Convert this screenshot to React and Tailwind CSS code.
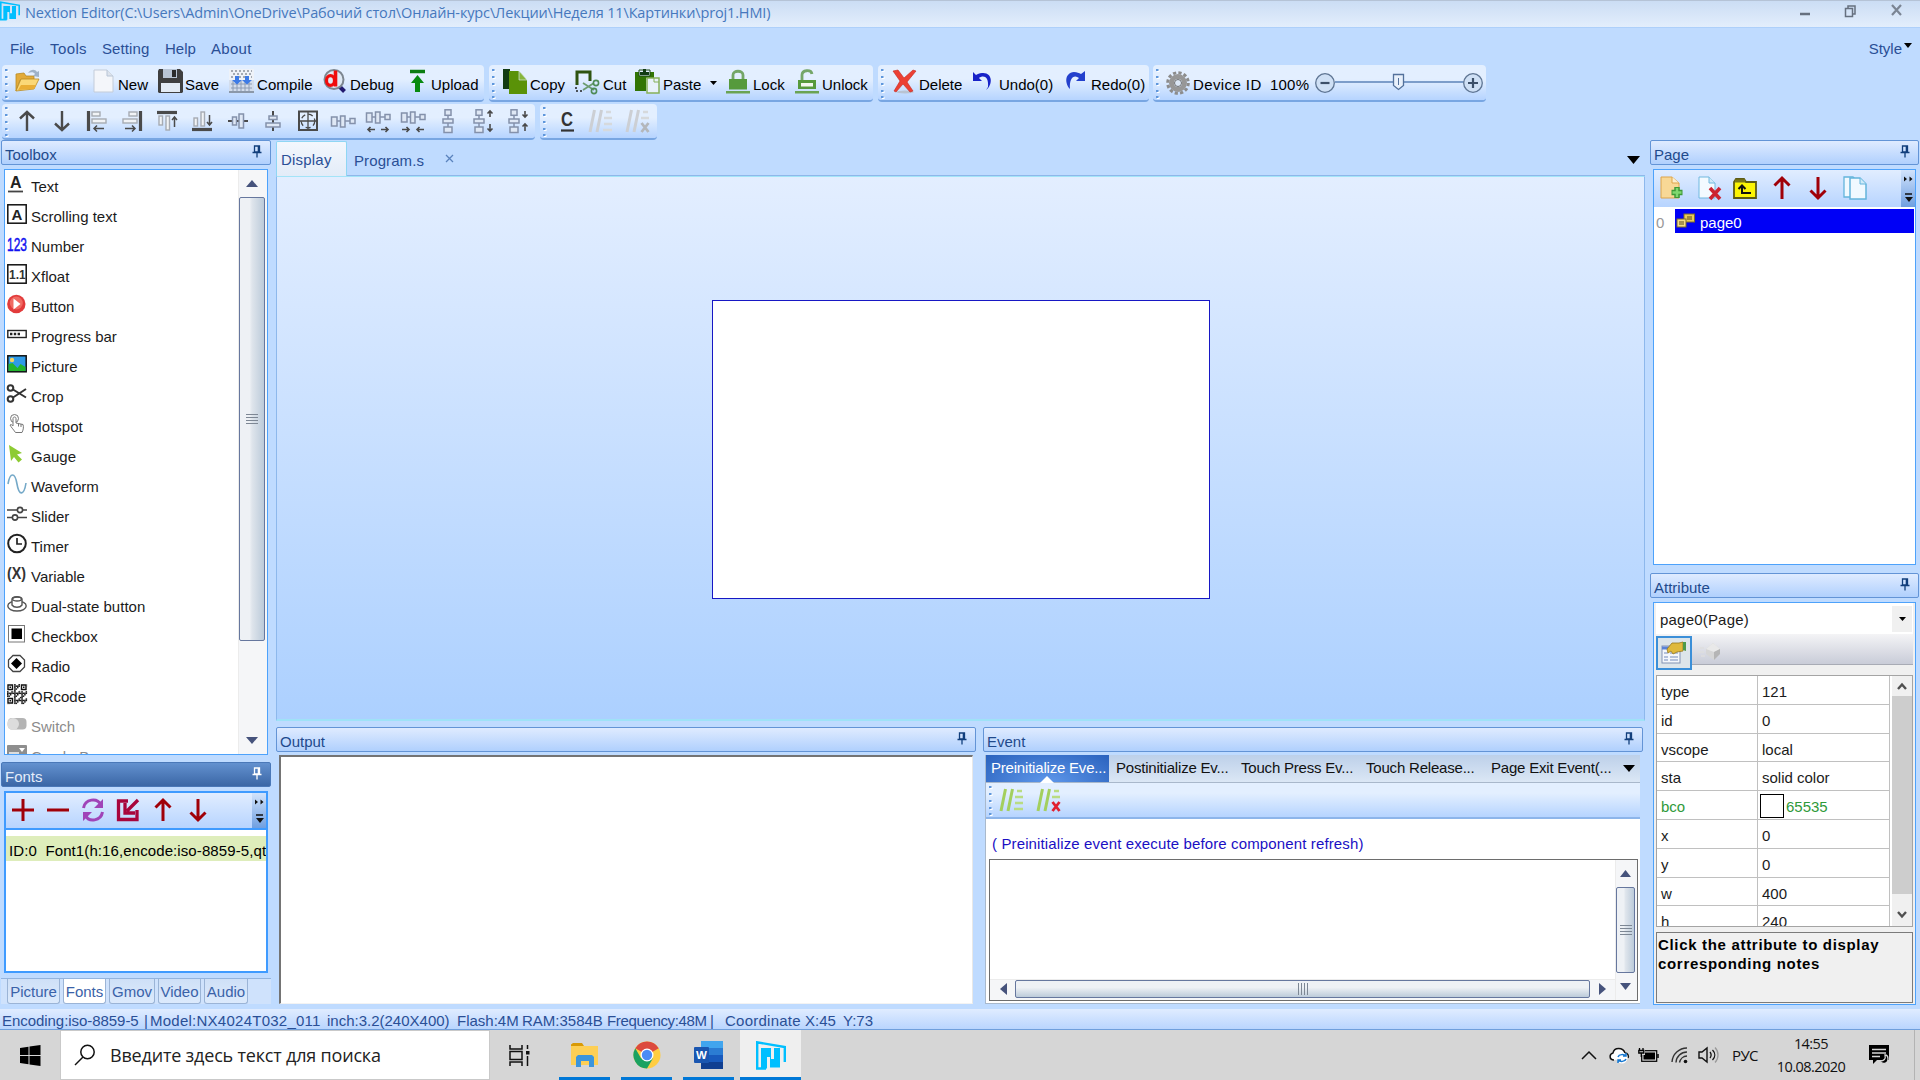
import React from 'react';

/* ---------- shared bits ---------- */

function Svg({ w, h, className = '', children }) {
  return (
    <svg width={w} height={h} viewBox={`0 0 ${w} ${h}`} fill="none" className={`shrink-0 overflow-visible ${className}`}>
      {children}
    </svg>
  );
}

const Pin = ({ color = '#123f7c' }) => (
  <Svg w={10} h={13}>
    <path d="M2.5 1h5v6h-5zM0.5 7.5h9M5 8v4.5" stroke={color} strokeWidth="1.3" />
    <path d="M6.5 1v6" stroke={color} strokeWidth="1.6" />
  </Svg>
);

function PanelHeader({ title, active, className = '' }) {
  const tone = active
    ? 'from-[#6391cf] to-[#3b67a6] border-[#4a78b8] text-[#e4edfa]'
    : 'from-[#dfebff] to-[#b0d0fd] border-[#6394d6] text-[#1f4a8c]';
  return (
    <div className={`flex h-[25px] shrink-0 justify-between rounded-[2px] border bg-gradient-to-b pl-[3px] pr-[8px] ${tone} ${className}`}>
      <span className="pt-[4px] leading-[20px]">{title}</span>
      <span className="pt-[4px]"><Pin color={active ? '#fff' : '#123f7c'} /></span>
    </div>
  );
}

const Grip = () => (
  <Svg w={4} h={32} className="self-center">
    {[2, 9, 16, 23, 29].map((y) => (
      <g key={y}>
        <rect x="1" y={y + 1} width="2.5" height="2" fill="#fff" />
        <rect x="0" y={y} width="2.5" height="2" fill="#5f97dc" />
      </g>
    ))}
  </Svg>
);

function Strip({ className, children }) {
  return (
    <div className={`flex shrink-0 items-center rounded-[4px] border-b-2 border-[#78a6e2] bg-gradient-to-b from-[#e3efff] from-40% to-[#b6d4ff] pl-[3px] ${className}`}>
      <Grip />
      {children}
    </div>
  );
}

function Tool({ icon, label, className, gap = 'pl-[4px]' }) {
  return (
    <div className={`flex shrink-0 items-center ${className}`}>
      {icon}
      <span className={`pt-[5px] leading-[20px] text-black ${gap}`}>{label}</span>
    </div>
  );
}

/* ---------- main toolbar icons ---------- */

const OpenIcon = (
  <Svg w={25} h={25} className="mb-[3px]">
    <path d="M1 5l8-1 2 3h8v4H5L1 22z" fill="#e3ab3a" stroke="#b98a22" strokeWidth=".8" />
    <path d="M1 22L6 10h18l-5 10-18 2z" fill="#fbd877" stroke="#b98a22" strokeWidth=".8" />
    <path d="M3 21l3-5h15l-2 4z" fill="#eaae35" />
    <path d="M13 4c3-4 7-4 9-1l2-1v6l-6-1 2-2c-1-2-4-2-7-1z" fill="#9fb2c8" />
  </Svg>
);
const NewIcon = (
  <Svg w={21} h={25} className="mb-[3px]">
    <path d="M1 1h13l6 6v16H1z" fill="#f4f6fa" stroke="#c3ccd9" />
    <path d="M14 1v6h6" fill="#dde3ec" stroke="#b8c5d6" />
  </Svg>
);
const SaveIcon = (
  <Svg w={25} h={25} className="mb-[3px]">
    <path d="M0 2l1-2h21l3 3v20l-1 1H1l-1-1z" fill="#3f3f3f" />
    <path d="M5 0h14v9H5z" fill="#b9c5d4" />
    <path d="M14 1h4v7h-4z" fill="#2b2b2b" />
    <path d="M3 14h19v9H3z" fill="#e3ebf4" />
  </Svg>
);
const CompileIcon = (
  <Svg w={25} h={25} className="mb-[3px]">
    <rect x="0" y="0" width="25" height="23" fill="#eef2f8" />
    <path d="M2 2h21M4 5h19M2 8h21" stroke="#8c939c" strokeWidth="1.4" strokeDasharray="2 2" />
    <path d="M0 11h25v13H0z" fill="#d3ddec" />
    <path d="M2 15h21M2 19h21M4 12v10M8 12v10M12 12v10M16 12v10M20 12v10" stroke="#8c9cb4" strokeWidth="1" />
    <path d="M6 7v4H3l5 4.500 5-4.500h-3V7zM16 7v4h-3l5 4.500 5-4.500h-3V7z" fill="#3d7be6" />
    <rect x="0" y="22" width="25" height="2" fill="#8b98a9" />
  </Svg>
);
const DebugIcon = (
  <Svg w={24} h={25} className="mb-[3px]">
    <path d="M15 16l6.500 6.500" stroke="#221a70" strokeWidth="4" />
    <circle cx="11" cy="10.500" r="9.500" fill="#dfe9f4" stroke="#7d8690" strokeWidth="2" />
    <path d="M12.500 1.500v16" stroke="#f00c0c" strokeWidth="3.600" />
    <ellipse cx="7.500" cy="11.500" rx="4" ry="4.800" stroke="#f00c0c" strokeWidth="3.200" />
  </Svg>
);
const UploadIcon = (
  <Svg w={17} h={25} className="mb-[3px]">
    <path d="M1 2.500h15" stroke="#0b7d12" strokeWidth="3.500" />
    <path d="M8.500 6L15 14h-4v9H6v-9H2z" fill="#078a10" />
  </Svg>
);
const CopyIcon = (
  <Svg w={25} h={25} className="mb-[3px]">
    <path d="M0 0h7v20H0z" fill="#123c14" />
    <path d="M6 2h10l8 9v14H6z" fill="#5a9208" />
    <path d="M16 2v9h8z" fill="#86b53c" stroke="#e3efff" strokeWidth=".6" />
  </Svg>
);
const CutIcon = (
  <Svg w={25} h={25} className="mb-[3px]">
    <path d="M2 16V3h13v9" stroke="#2f5410" strokeWidth="3" />
    <path d="M1 18v4h8" stroke="#222" strokeWidth="1.500" strokeDasharray="2 2" />
    <path d="M8 14l11 7M8 21l11-7" stroke="#6c9c70" strokeWidth="1.800" />
    <circle cx="21" cy="14" r="2.600" stroke="#4f8b57" strokeWidth="1.600" />
    <circle cx="19" cy="22" r="2.600" stroke="#4f8b57" strokeWidth="1.600" />
  </Svg>
);
const PasteIcon = (
  <Svg w={25} h={25} className="mb-[3px]">
    <path d="M0 3h19v6h-8v13H0z" fill="#317404" />
    <path d="M4 1h11v6H4z" fill="#e3efff" stroke="#1e4a16" />
    <path d="M8 0h3v3h3v3H5V3h3z" fill="#123c14" />
    <path d="M12 9h12v15H12z" fill="#e8f1fa" stroke="#86b058" strokeWidth="1.500" />
    <path d="M19 9v4h5" stroke="#86b058" />
  </Svg>
);
const LockBase = ({ open }) => (
  <Svg w={24} h={25} className="mb-[3px]">
    <path
      d={open ? 'M7 11V6c0-5 9-6 10-1' : 'M7 11V6c0-5 10-5 10 0v5'}
      stroke="#74a668"
      strokeWidth="2.800"
    />
    {open ? (
      <g>
        <rect x="3" y="11" width="18" height="9" fill="#569a3c" />
        <rect x="6" y="14" width="12" height="3.500" fill="#f2f8ee" />
      </g>
    ) : (
      <rect x="3" y="10" width="18" height="10.500" fill="#569a3c" />
    )}
    <rect x="0" y="22" width="24" height="2.500" fill="#6aa353" />
  </Svg>
);
const DeleteIcon = (
  <Svg w={24} h={25} className="mb-[3px]">
    <ellipse cx="12" cy="23" rx="9" ry="1.500" fill="#b9c3d2" />
    <path d="M0 2l5-1 6 8 9-8 3 1-9 11 6 9-3 1-7-8-7 8-2-1 6-10z" fill="#ec4034" stroke="#c4271c" strokeWidth=".6" />
  </Svg>
);
const UndoIcon = (
  <Svg w={21} h={25} className="mb-[2px]">
    <path d="M0 3v9h9L6 9c4-3 10-2 9 9l-2 3c7-5 7-18-4-17-3 0-4 1-6 2z" fill="#1722c8" />
  </Svg>
);
const RedoIcon = (
  <Svg w={21} h={25} className="mb-[2px]">
    <path d="M20 2v10h-9l3-3C9 5 4 9 5 20 0 15-1 4 9 3c3 0 5 1 7 2z" fill="#2340cd" />
  </Svg>
);
const GearIcon = (
  <Svg w={24} h={26}>
    <circle cx="12" cy="13" r="10.300" stroke="#8c8c8c" strokeWidth="3" strokeDasharray="3.200 2.200" />
    <circle cx="12" cy="13" r="6.500" stroke="#979797" strokeWidth="5" />
    <circle cx="12" cy="13" r="3.500" fill="#dbe7f6" stroke="#6f6f6f" />
  </Svg>
);

const Zoomer = () => (
  <Svg w={172} h={26}>
    <path d="M21 12h130" stroke="#7c9dca" strokeWidth="2" />
    <circle cx="11" cy="13" r="9.300" fill="#cfe0f5" stroke="#5e7593" strokeWidth="1.300" />
    <path d="M6.500 13h9" stroke="#3c4f68" strokeWidth="2.200" />
    <circle cx="159" cy="13" r="9.300" fill="#cfe0f5" stroke="#5e7593" strokeWidth="1.300" />
    <path d="M154 13h10M159 8v10" stroke="#3c4f68" strokeWidth="2.200" />
    <path d="M79.500 4.500h10v11l-5 4-5-4z" fill="#e8f0fb" stroke="#53719b" strokeWidth="1.300" />
    <path d="M84.500 8v7" stroke="#53719b" />
  </Svg>
);

/* ---------- alignment toolbar ---------- */

const dk = '#4a4a4a';
const bx = { fill: '#dfe8f5', stroke: '#8491ab', strokeWidth: 1.5 };
const gx = { fill: '#f1f3f6', stroke: '#a6abb3', strokeWidth: 1.4 };
const Link = ({ d }) => <path d={d} stroke="#8491ab" strokeWidth="1.500" />;

const Column = ({ x }) => (
  <g>
    <Link d={`M${x} 4v16`} />
    <rect x={x - 3} y="0.800" width="6" height="5.500" {...bx} />
    <rect x={x - 5} y="10" width="10" height="4" {...bx} />
    <rect x={x - 4} y="18" width="8" height="5.500" {...bx} />
  </g>
);
const Row = ({ y }) => (
  <g>
    <Link d={`M5 ${y}h16`} />
    <rect x="1.500" y={y - 4} width="5.500" height="9" {...bx} />
    <rect x="10.500" y={y - 5} width="4.500" height="11" {...bx} />
    <rect x="20" y={y - 2.5} width="5" height="5" {...bx} />
  </g>
);

const alignIcons = [
  <path key="up" d="M13 22V3M6 9.500L13 3l7 6.500" stroke={dk} strokeWidth="2.400" />,
  <path key="down" d="M13 2v19M6 14.500l7 6.500 7-6.500" stroke={dk} strokeWidth="2.400" />,
  <g key="left"><path d="M4.500 2v20" stroke={dk} strokeWidth="3.200" /><rect x="8" y="3" width="8" height="4" {...gx} /><rect x="8" y="10" width="14" height="4" {...gx} /><path d="M20 19.500h-10M13 16.500l-3 3 3 3" stroke={dk} strokeWidth="1.500" /></g>,
  <g key="right"><path d="M21.500 2v20" stroke={dk} strokeWidth="3.200" /><rect x="10" y="3" width="8" height="4" {...gx} /><rect x="4" y="10" width="14" height="4" {...gx} /><path d="M6 19.500h10M13 16.500l3 3-3 3" stroke={dk} strokeWidth="1.500" /></g>,
  <g key="top"><path d="M3 3.500h20" stroke={dk} strokeWidth="3.200" /><rect x="5" y="7" width="3.500" height="9" {...gx} /><rect x="12" y="7" width="3.500" height="14" {...gx} /><path d="M20.500 18V8M18 11l2.500-3 2.500 3" stroke={dk} strokeWidth="1.500" /></g>,
  <g key="bottom"><path d="M3 20.500h20" stroke={dk} strokeWidth="3.200" /><rect x="5" y="9" width="3.500" height="8" {...gx} /><rect x="12" y="3" width="3.500" height="14" {...gx} /><path d="M20.500 6v10M18 13l2.500 3 2.500-3" stroke={dk} strokeWidth="1.500" /></g>,
  <g key="mid"><path d="M3 12h20" stroke={dk} strokeWidth="2" /><rect x="7.500" y="8" width="4" height="8" {...bx} /><rect x="14" y="5" width="4.500" height="14" {...bx} /></g>,
  <g key="center"><path d="M13 2v20" stroke={dk} strokeWidth="2" /><rect x="9" y="7" width="8" height="3.500" {...bx} /><rect x="6" y="14" width="14" height="4" {...bx} /></g>,
  <g key="grid"><rect x="4" y="2.500" width="18" height="18.500" stroke={dk} strokeWidth="2" /><path d="M13 3v18M4 12h18" stroke={dk} strokeWidth="1.300" /><circle cx="13" cy="12" r="6.800" stroke={dk} strokeWidth="1.300" strokeDasharray="5 3" /></g>,
  <Row key="h1" y={12} />,
  <g key="h2"><Row y={8} /><path d="M10 20.500H3M5.500 18L3 20.500 5.500 23M16 20.500h7M20.500 18l2.500 2.500-2.500 2.500" stroke={dk} strokeWidth="1.600" /></g>,
  <g key="h3"><Row y={8} /><path d="M2 20.500h7M6.500 18L9 20.500 6.500 23M24 20.500h-7M19.500 18L17 20.500l2.500 2.500" stroke={dk} strokeWidth="1.600" /></g>,
  <Column key="v1" x={13} />,
  <g key="v2"><Column x={9} /><path d="M20 8V2M17.500 4.500L20 2l2.500 2.500M20 15v7M17.500 19.500L20 22l2.500-2.500" stroke={dk} strokeWidth="1.600" /></g>,
  <g key="v3"><Column x={9} /><path d="M20 2v6M17.500 5.500L20 8l2.500-2.500M20 22v-7M17.500 17.500L20 15l2.500 2.500" stroke={dk} strokeWidth="1.600" /></g>,
];

const CommentIcon = ({ color, lines, cross }) => (
  <Svg w={26} h={24}>
    <path d="M6.500 1L2 23M13.500 1L9 23" stroke={color} strokeWidth="3" />
    {cross ? (
      <g>
        <path d="M18 3h5M16 9h8" stroke={lines} strokeWidth="2.400" />
        <path d="M16.500 14l7 9M23.500 14l-7 9" stroke={cross} strokeWidth="2.800" />
      </g>
    ) : (
      <path d="M18 3h5M16 9h8M16 15h8M15 21h9" stroke={lines} strokeWidth="2.400" />
    )}
  </Svg>
);

/* ---------- toolbox ---------- */

const qrCells = [];
for (let y = 0; y < 14; y += 1) {
  for (let x = 0; x < 14; x += 1) {
    if ((x * 7 + y * 5 + x * y * 3) % 5 < 2) qrCells.push([x * 1.43, y * 1.43]);
  }
}

const toolbox = [
  ['Text', <g><text x="3" y="14" fontSize="16" fontWeight="700" fill="#222" fontFamily="Liberation Sans">A</text><path d="M1 17.500h15" stroke="#444" strokeWidth="1.800" /></g>],
  ['Scrolling text', <g><rect x=".8" y=".8" width="18.400" height="18.400" stroke="#111" strokeWidth="1.500" /><text x="4.500" y="15.500" fontSize="15" fontWeight="700" fill="#222" fontFamily="Liberation Sans">A</text></g>],
  ['Number', <text x="0" y="16.500" fontSize="19" textLength="20" lengthAdjust="spacingAndGlyphs" fill="#1212f0" stroke="#1212f0" strokeWidth=".5" fontFamily="Liberation Sans">123</text>],
  ['Xfloat', <g><rect x=".8" y=".8" width="18.400" height="18.400" stroke="#111" strokeWidth="1.500" /><text x="2" y="14.500" fontSize="12" fontWeight="700" fill="#333" fontFamily="Liberation Sans">1.1</text></g>],
  ['Button', <g><circle cx="9.300" cy="10" r="9.200" fill="#e23b3b" /><circle cx="9.300" cy="9" r="6.500" fill="#f06a62" /><path d="M6.500 4.500l7 5.500-7 5.500z" fill="#fff" /></g>],
  ['Progress bar', <g><rect x=".8" y="6.500" width="18.400" height="7" stroke="#222" strokeWidth="1.400" /><path d="M3 10h10" stroke="#222" strokeWidth="2.400" strokeDasharray="2.400 1.400" /></g>],
  ['Picture', <g><rect x=".8" y="1.800" width="18.400" height="16" fill="#2f9be8" stroke="#111" strokeWidth="1.500" /><circle cx="5" cy="6" r="2.200" fill="#f5d561" /><path d="M1.500 10l4-1 5 5 3-4 5 3v4h-17z" fill="#23b52e" /></g>],
  ['Crop', <g stroke="#333" strokeWidth="2"><circle cx="3.500" cy="4" r="2.800" /><circle cx="3.500" cy="15" r="2.800" /><path d="M6 5.500l13 8M6 13.500L19 5" /></g>],
  ['Hotspot', <g stroke="#777" strokeWidth="1"><circle cx="7.500" cy="4.500" r="4" /><path d="M6 12V4.500c0-2 3-2 3 0V9l7 1.500c1 3 0 6-1 8H8.500C6 15 4 13 3 11c1-1 2 0 3 1z" fill="#fff" /><path d="M11.500 9.500v3M14 10v3" /></g>],
  ['Gauge', <path d="M2 1l13 8-5 1.500 5 5-3.500 3-4.500-5.500-3 4z" fill="#8dcb33" />],
  ['Waveform', <path d="M1 10C3-2 8-2 10 10s7 12 9-1" stroke="#75a9c8" strokeWidth="1.600" />],
  ['Slider', <g stroke="#444" strokeWidth="1.600"><path d="M0 6h20M0 13.500h20" /><circle cx="13" cy="6" r="2.600" fill="#fff" /><circle cx="8" cy="13.500" r="2.600" fill="#fff" /></g>],
  ['Timer', <g stroke="#222" strokeWidth="2"><circle cx="10" cy="9.500" r="8.800" /><path d="M10 4v6h5" strokeWidth="1.700" /></g>],
  ['Variable', <text x="0" y="15" fontSize="17" textLength="19" lengthAdjust="spacingAndGlyphs" fontWeight="700" fill="#333" fontFamily="Liberation Sans">(X)</text>],
  ['Dual-state button', <g stroke="#555" strokeWidth="1.400"><ellipse cx="10" cy="12" rx="9.200" ry="5" /><path d="M5 11V5c1-3 9-3 10 0v6c-2 3-8 3-10 0z" fill="#fff" /><ellipse cx="10" cy="5" rx="4.500" ry="2" /></g>],
  ['Checkbox', <g><rect x="1.500" y="1.500" width="16" height="16.500" stroke="#777" /><rect x="4.500" y="4.500" width="10.500" height="10.500" fill="#000" /></g>],
  ['Radio', <g><path d="M6 1.500h7l4.500 4.500v7L13 17.500H6L1.500 13V6z" stroke="#444" strokeWidth="1.300" /><path d="M9.500 4L15 9.500 9.500 15 4 9.500z" fill="#000" /></g>],
  ['QRcode', <g>{qrCells.map(([x, y]) => <rect key={`${x}-${y}`} x={x} y={y} width="1.500" height="1.500" fill="#1a1a1a" />)}<path d="M0 0h7v7H0zM13 0h7v7h-7zM0 13h7v7H0z" fill="#fff" /><path d="M1 1h4.500v4.500H1zM14.500 1H19v4.500h-4.500zM1 14.500h4.500V19H1z" stroke="#111" strokeWidth="1.400" /><path d="M2.500 2.500H4V4H2.500zM16 2.500h1.500V4H16zM2.500 16H4v1.500H2.500z" fill="#111" /></g>],
  ['Switch', <g><rect x="1" y="4" width="18.500" height="11.500" rx="4" fill="#b4b4b4" /><circle cx="6" cy="10" r="6" fill="#dcdcdc" /></g>],
  ['ComboBox', <g><rect x="0" y="1" width="20" height="18" rx="1" fill="#8e8e8e" /><path d="M2 8h10v5H2z" fill="#ddd" /><path d="M12 4h6l-3 4z" fill="#fff" /></g>],
];

const Tri = ({ dir, w = 12, h = 7, color = '#46537c' }) => {
  const d = {
    up: `M0 ${h}L${w / 2} 0L${w} ${h}z`,
    down: `M0 0L${w / 2} ${h}L${w} 0z`,
    left: `M${w} 0L0 ${h / 2}L${w} ${h}z`,
    right: `M0 0L${w} ${h / 2}L0 ${h}z`,
  }[dir];
  return <Svg w={w} h={h}><path d={d} fill={color} /></Svg>;
};

const VThumb = ({ className }) => (
  <div className={`flex w-full shrink-0 flex-col items-center justify-center gap-[2px] rounded-[2px] border border-[#66779e] bg-gradient-to-r from-[#eef1f5] from-40% via-[#dfe5ec] via-50% to-[#bccbda] ${className}`}>
    {[0, 1, 2, 3].map((i) => <div key={i} className="h-px w-[12px] bg-[#7d8794]" />)}
  </div>
);

function Toolbox() {
  return (
    <div className="ml-[4px] mt-[4px] flex h-[586px] w-[264px] shrink-0 overflow-hidden border border-[#4da2fb] bg-white">
      <div className="flex flex-1 flex-col overflow-hidden pl-[2px]">
        {toolbox.map(([name, icon], i) => (
          <div key={name} className="flex h-[30px] shrink-0 items-center">
            <Svg w={20} h={20} className="mb-[3px]">{icon}</Svg>
            <span className={`pl-[4px] pt-[4px] leading-[20px] ${i > 17 ? 'text-[#8b8b8b]' : 'text-[#1b1b1b]'}`}>{name}</span>
          </div>
        ))}
      </div>
      <div className="flex w-[29px] flex-col items-center border-l border-[#ececec] bg-[#f5f6f8] pr-[2px]">
        <div className="flex h-[27px] shrink-0 items-center"><Tri dir="up" /></div>
        <VThumb className="h-[444px]" />
        <div className="flex flex-1 items-center pt-[85px]"><Tri dir="down" /></div>
      </div>
    </div>
  );
}

/* ---------- fonts panel ---------- */

const red = '#a00008';
const ArrowUp = <path d="M12 23V2M4.500 9.500L12 2l7.500 7.500" stroke={red} strokeWidth="3" />;
const ArrowDown = <path d="M12 1v21M4.500 14.500L12 22l7.500-7.500" stroke={red} strokeWidth="3" />;

const fontTools = [
  <path d="M12 1v22M1 12h22" stroke={red} strokeWidth="3" />,
  <path d="M1 12h22" stroke={red} strokeWidth="3" />,
  <g stroke="#a044b8" strokeWidth="3"><path d="M2.500 10C4 1 16-1 20 7M21.500 14C20 23 8 25 4 17" /><path d="M22 1v9h-9zM2 23v-9h9z" fill="#a044b8" stroke="none" /></g>,
  <g stroke="#a8053c" strokeWidth="3.300"><path d="M12 3H2.500v18.500H21V12" /><path d="M22 2L11 13M9 5v10h10" /></g>,
  ArrowUp,
  ArrowDown,
];

const Overflow = ({ className = '' }) => (
  <div className={`flex w-[14px] shrink-0 flex-col items-center justify-between bg-gradient-to-b from-[#d2e3fb] to-[#6f9fe0] pb-[5px] pt-[6px] ${className}`}>
    <Svg w={9} h={6}><path d="M0 0.500l3 2.500-3 2.500zM5.500 0.500l3 2.500-3 2.500z" fill="#111" /></Svg>
    <Svg w={9} h={9}><path d="M1 1h7" stroke="#111" strokeWidth="1.500" /><path d="M1 4h8L5 9z" fill="#111" /></Svg>
  </div>
);

function FontsPanel() {
  return (
    <div className="ml-[4px] mt-[4px] flex h-[182px] w-[264px] shrink-0 flex-col border-2 border-[#3f9bff] bg-white">
      <div className="flex h-[35px] shrink-0 items-center bg-gradient-to-b from-[#e1edff] to-[#b7d4ff]">
        <div className="mb-[2px] flex flex-1 gap-[11px] pl-[5px]">
          {fontTools.map((t, i) => <Svg key={i} w={24} h={24}>{t}</Svg>)}
        </div>
        <Overflow className="h-full" />
      </div>
      <div className="h-[2px] shrink-0 bg-[#3f9bff]" />
      <div className="mt-[6px] h-[25px] overflow-hidden whitespace-pre bg-[#deedbb] pl-[3px] pt-[5px] leading-[20px] tracking-[0.100px] text-black">
        ID:0  Font1(h:16,encode:iso-8859-5,qt
      </div>
    </div>
  );
}

const bottomTabs = [
  ['Picture', 'w-[53px]'], ['Fonts', 'w-[43px]'], ['Gmov', 'w-[46px]'], ['Video', 'w-[43px]'], ['Audio', 'w-[44px]'],
];

/* ---------- center ---------- */

const eventTabs = [
  ['Postinitialize Ev...', 'w-[125px]'], ['Touch Press Ev...', 'w-[125px]'],
  ['Touch Release...', 'w-[125px]'], ['Page Exit Event(...', 'w-[132px]'],
];

function EventPanel() {
  return (
    <div className="ml-[2px] mt-[3px] flex h-[249px] w-[655px] shrink-0 flex-col border-b border-l border-[#a9b9cc] bg-white">
      <div className="flex h-[28px] shrink-0 border-b border-[#a9b8cb] bg-gradient-to-b from-[#bdd0e9] to-[#dbe7f5] text-[#111]">
        <div className="relative w-[123px] bg-[radial-gradient(ellipse_at_50%_100%,#5e97ea,#2a62bd)] pl-[5px] pt-[3px] leading-[20px] text-white">
          <span className="tracking-[-0.200px]">Preinitialize Eve...</span>
          <span className="absolute bottom-[-1px] left-[54px]"><Tri dir="up" w={14} h={7} color="#fff" /></span>
        </div>
        <div className="flex pl-[7px] pt-[3px] leading-[20px] tracking-[-0.200px]">
          {eventTabs.map(([t, w]) => <span key={t} className={`shrink-0 whitespace-nowrap ${w}`}>{t}</span>)}
        </div>
        <div className="pt-[10px]"><Tri dir="down" color="#000" /></div>
      </div>
      <div className="flex h-[36px] shrink-0 items-center border-b-2 border-[#8db5ea] bg-gradient-to-b from-[#e3efff] from-30% to-[#b6d4ff] pl-[3px]">
        <Grip />
        <div className="flex gap-[11px] pl-[6px]">
          <CommentIcon color="#a3cf5e" lines="#b9dc82" />
          <CommentIcon color="#a3cf5e" lines="#b9dc82" cross="#e02030" />
        </div>
      </div>
      <div className="h-[40px] shrink-0 whitespace-nowrap pl-[6px] pt-[15px] leading-[20px] tracking-[0.130px] text-[#1a0fc4]">
        ( Preinitialize event execute before component refresh)
      </div>
      <div className="ml-[3px] flex h-[142px] w-[649px] border border-[#6d6d6d]">
        <div className="flex flex-1 flex-col justify-end">
          <div className="flex h-[21px] items-center border-t border-[#ececec] bg-[#f5f6f8] pb-[2px] pl-[10px]">
            <Tri dir="left" w={7} h={12} />
            <div className="ml-[8px] mr-[9px] flex h-[18px] w-[575px] items-center justify-center gap-[2px] rounded-[2px] border border-[#66779e] bg-gradient-to-b from-[#eef1f5] from-40% to-[#bccbda]">
              {[0, 1, 2, 3].map((i) => <div key={i} className="h-[12px] w-px bg-[#7d8794]" />)}
            </div>
            <Tri dir="right" w={7} h={12} />
          </div>
        </div>
        <div className="flex w-[22px] flex-col items-center border-l border-[#ececec] bg-[#f5f6f8] pr-[2px]">
          <div className="flex h-[27px] shrink-0 items-center"><Tri dir="up" w={11} /></div>
          <VThumb className="h-[86px]" />
          <div className="flex flex-1 items-center"><Tri dir="down" w={11} /></div>
        </div>
      </div>
    </div>
  );
}

function Center() {
  return (
    <div className="ml-[5px] flex w-[1369px] shrink-0 flex-col">
      <div className="flex h-[36px] shrink-0 items-end text-[#2a4f96]">
        <div className="h-[35px] w-[71px] rounded-t-[2px] border border-b-0 border-[#8fd6f4] bg-gradient-to-b from-[#f3f7fd] to-[#e3ecf8] pl-[4px] pt-[8px] leading-[20px] tracking-[0.200px]">Display</div>
        <div className="flex h-[35px] flex-1 border-b border-[#8fb7ea] pl-[7px] pt-[10px] leading-[20px]">
          <span className="w-[91px] tracking-[0.100px]">Program.s</span>
          <Svg w={9} h={9} className="mt-[3px]"><path d="M1 1l7 7M8 1L1 8" stroke="#5a83bd" strokeWidth="1.300" /></Svg>
          <span className="ml-auto mr-[5px] mt-[5px]"><Tri dir="down" w={13} h={8} color="#000" /></span>
        </div>
      </div>
      <div className="flex h-[545px] shrink-0 border-x border-b-2 border-x-[#8db8ec] border-b-[#9fe2f7] border-t border-t-[#a3e4f8] bg-gradient-to-b from-[#e3eeff] to-[#acd0ff] pl-[435px] pt-[123px]">
        <div className="h-[299px] w-[498px] border border-[#1717c4] bg-white" />
      </div>
      <div className="mt-[6px] flex">
        <div className="w-[700px]">
          <PanelHeader title="Output" />
          <div className="ml-[3px] mt-[3px] h-[249px] w-[694px] border border-b-[#f3f3f3] border-l-2 border-r-[#e8e8e8] border-t-2 border-l-[#747474] border-t-[#747474] bg-white" />
        </div>
        <div className="ml-[7px] w-[660px]">
          <PanelHeader title="Event" />
          <EventPanel />
        </div>
      </div>
    </div>
  );
}

/* ---------- right ---------- */

const pageTools = [
  <g><path d="M1 1h11l7 6v15H1z" fill="#f8d896" stroke="#dca44b" /><path d="M12 1v6h7" stroke="#dca44b" fill="#fdf0d0" /><path d="M17 11v11M11.500 16.500h11" stroke="#3f9a38" strokeWidth="5.500" /><path d="M17 12v9M12.500 16.500h9" stroke="#7fd86f" strokeWidth="2.500" /></g>,
  <g><path d="M2 1h10l6 6v15H2z" fill="#f3faff" stroke="#71b8de" /><path d="M12 1v6h6" stroke="#71b8de" fill="#cfe9f7" /><path d="M13 12l10 11M23 12L13 23" stroke="#cc2230" strokeWidth="3.600" /></g>,
  <g><path d="M1 22V6l2-3h8l2 3h10v16z" fill="#fbf404" stroke="#5d5b14" strokeWidth="1.800" /><path d="M2 5h10" stroke="#7a7818" strokeWidth="3" /><path d="M18 17H9v-7M5.500 13L9 9.500l3.500 3.500" stroke="#111" strokeWidth="2" /></g>,
  ArrowUp,
  ArrowDown,
  <g><path d="M1 1h9l4 4v16H1z" fill="#f0f9ff" stroke="#63b4dc" strokeWidth="1.300" /><path d="M7 2h10l6 6v15H7z" fill="#f0f9ff" stroke="#63b4dc" strokeWidth="1.500" /><path d="M17 2v6h6" stroke="#63b4dc" fill="#cfeaf8" /></g>,
];

const attrs = [
  ['type', '121'], ['id', '0'], ['vscope', 'local'], ['sta', 'solid color'],
  ['bco', '65535'], ['x', '0'], ['y', '0'], ['w', '400'], ['h', '240'],
];

function RightColumn() {
  return (
    <div className="ml-[5px] flex w-[269px] shrink-0 flex-col">
      <PanelHeader title="Page" />
      <div className="ml-[3px] mt-[4px] h-[396px] w-[263px] shrink-0 border border-[#4da2fb] bg-white">
        <div className="flex h-[37px] items-center bg-gradient-to-b from-[#e1edff] to-[#b7d4ff]">
          <div className="mb-[2px] flex flex-1 gap-[12.500px] pl-[6px]">
            {pageTools.map((t, i) => <Svg key={i} w={24} h={24}>{t}</Svg>)}
          </div>
          <Overflow className="h-full" />
        </div>
        <div className="mt-[2px] flex h-[24px] pr-[1px]">
          <span className="w-[21px] pl-[2px] pt-[4px] leading-[20px] text-[#999]">0</span>
          <div className="flex flex-1 bg-[#0000f6] pl-[1px] text-white">
            <Svg w={20} h={18} className="mt-[4px]">
              <rect x="8" y="1" width="10.500" height="8" fill="#e9cb5a" stroke="#7d6a2a" />
              <rect x="1" y="6" width="9" height="8" fill="#f3dc85" stroke="#7d6a2a" />
              <path d="M11 4h5M11 6h5M3 9h5M3 11h5" stroke="#5a4a1a" />
            </Svg>
            <span className="pl-[4px] pt-[4px] leading-[20px]">page0</span>
          </div>
        </div>
      </div>

      <PanelHeader title="Attribute" className="mt-[8px]" />
      <div className="ml-[3px] mt-[4px] flex h-[403px] w-[263px] shrink-0 flex-col border border-[#4da2fb] bg-[#f0f0f0] px-[2px]">
        <div className="flex h-[31px] shrink-0 justify-between bg-white pl-[4px] pr-[1px] pt-[3px]">
          <span className="pt-[4px] leading-[20px] tracking-[0.200px] text-[#1b1b1b]">page0(Page)</span>
          <span className="flex h-[26px] w-[20px] items-center justify-center bg-[#f0f0f0]"><Tri dir="down" w={7} h={4} color="#000" /></span>
        </div>
        <div className="flex h-[31px] shrink-0 border-b border-[#a8abb5] bg-gradient-to-b from-[#f4f4f6] to-[#c9ccd8]">
          <div className="mt-[2px] flex h-[34px] w-[36px] items-center justify-center border-2 border-[#3b8fd8] bg-[#dde5ea]">
            <Svg w={26} h={24}>
              <rect x="1" y="5" width="18" height="17" fill="#f4f7fc" stroke="#8393b3" />
              <path d="M1 7h18" stroke="#5a82d6" strokeWidth="3" />
              <path d="M3 12h4M9 12h8M3 16h4M9 16h8M3 19h4M9 19h8" stroke="#9fb0d0" strokeWidth="1.500" />
              <path d="M6 8l5-6 7 0 4-1v9l-6 1-4 2-2-3-3 2z" fill="#dfb93c" stroke="#95781f" strokeWidth=".8" />
              <path d="M22 1h3v9l-3-1z" fill="#4c9a4a" />
            </Svg>
          </div>
          <Svg w={24} h={24} className="ml-[6px] mt-[6px]">
            <path d="M8 9l7-6 7 6v5l-6 6-8-6z" fill="#d6d6d6" />
            <path d="M8 9l8 3 6-3-7-6z" fill="#e9e9e9" />
            <path d="M16 12l6-3v5l-6 6z" fill="#b5b5b5" />
            <path d="M2 8h4M0 12h6M3 16h4" stroke="#dedede" strokeWidth="1.500" />
          </Svg>
        </div>
        <div className="mt-[10px] flex h-[252px] shrink-0 overflow-hidden border border-[#a4a4a4] bg-white">
          <div className="flex-1 text-[#1b1b1b]">
            {attrs.map(([k, v]) => (
              <div key={k} className={`flex h-[28.800px] border-b border-[#c0c0c0] ${k === 'bco' ? 'text-[#2f9a3a]' : ''}`}>
                <div className="w-[101px] border-r border-[#c0c0c0] pl-[4px] pt-[6px] leading-[20px]">{k}</div>
                <div className="flex flex-1 border-r border-[#c0c0c0] pl-[4px] pt-[6px] leading-[20px]">
                  {k === 'bco' && <span className="ml-[-2px] mr-[2px] mt-[-3px] h-[24px] w-[24px] shrink-0 border border-black bg-white" />}
                  {v}
                </div>
              </div>
            ))}
          </div>
          <div className="ml-[2px] flex w-[20px] flex-col items-center bg-[#f0f0f0]">
            <Svg w={12} h={8} className="my-[6px]"><path d="M2 7l4-4.500L10 7" stroke="#505050" strokeWidth="2.400" /></Svg>
            <div className="h-[198px] w-full bg-[#cdcdcd]" />
            <Svg w={12} h={8} className="mt-[17px]"><path d="M2 1l4 4.500L10 1" stroke="#505050" strokeWidth="2.400" /></Svg>
          </div>
        </div>
        <div className="mt-[5px] h-[71px] shrink-0 whitespace-nowrap border border-[#7b7b7b] pl-[1px] pt-[2px] font-bold leading-[19px] tracking-[0.680px] text-black">
          Click the attribute to display<br />corresponding notes
        </div>
      </div>
    </div>
  );
}

/* ---------- taskbar ---------- */

const NextionLogo = ({ w = 30, h = 29 }) => (
  <svg width={w} height={h} viewBox="0 0 30 29" fill="none" className="shrink-0">
    <path d="M10 27.500H1.200V1.300L28.800 6v15" stroke="#00bfff" strokeWidth="2.400" />
    <path d="M5 7h10v11h3V7h6v19.500h-10V16h-3v11.500H5z" fill="#00bfff" />
  </svg>
);

const ExplorerIcon = (
  <Svg w={28} h={26}>
    <path d="M0 2.500L2 1h9l2 3H0z" fill="#d99a06" />
    <path d="M0 4h27v19H0z" fill="#fdcf55" />
    <path d="M5 25V15l2-2h14l2 2v10h-5v-6h-8v6z" fill="#3c95dc" />
  </Svg>
);
const ChromeIcon = (
  <Svg w={28} h={28}>
    <circle cx="14" cy="14" r="13.500" fill="#ffcd41" />
    <path d="M14 14L2.300 7.200A13.500 13.500 0 0 1 25.700 7.200z" fill="#dc4a3d" />
    <path d="M2.300 7.200A13.500 13.500 0 0 0 14 27.500l6-10.300-6 2-6-2z" fill="#1ba261" />
    <circle cx="14" cy="14" r="6.500" fill="#fff" />
    <circle cx="14" cy="14" r="5.200" fill="#4b8bf5" />
  </Svg>
);
const WordIcon = (
  <Svg w={30} h={28}>
    <rect x="7" y="0" width="22" height="7" fill="#41a5ee" />
    <rect x="7" y="7" width="22" height="7" fill="#2b7cd3" />
    <rect x="7" y="14" width="22" height="7" fill="#185abd" />
    <rect x="7" y="21" width="22" height="7" fill="#103f91" />
    <rect x="0" y="6" width="15" height="16" rx="1" fill="#1a56b0" />
    <text x="2" y="18" fontSize="11.500" fontWeight="700" fill="#fff" fontFamily="Liberation Sans">W</text>
  </Svg>
);

function TaskButton({ icon, active, className }) {
  return (
    <div className={`flex h-full shrink-0 flex-col items-center border-b-[3px] border-[#0078d7] ${active ? 'bg-[#efefef]' : ''} ${className}`}>
      <div className="flex flex-1 items-center pt-[3px]">{icon}</div>
    </div>
  );
}

function Taskbar() {
  return (
    <div className="flex h-[50px] shrink-0 items-center bg-[#d6d6d6] font-['Open_Sans',sans-serif] text-[#111]">
      <div className="flex w-[60px] justify-center">
        <Svg w={21} h={21}>
          <path d="M0 3l8.500-1.200V10H0zM9.500 1.600L20.500 0v10h-11zM0 11h8.500v8.200L0 18zM9.500 11h11v10l-11-1.500z" fill="#000" />
        </Svg>
      </div>
      <div className="flex h-full w-[430px] shrink-0 items-center border border-[#c9c9c9] bg-white">
        <Svg w={22} h={22} className="ml-[13px]">
          <circle cx="13.500" cy="8" r="6.700" stroke="#111" strokeWidth="1.500" />
          <path d="M9 13l-8 8" stroke="#111" strokeWidth="1.500" />
        </Svg>
        <span className="whitespace-nowrap pl-[14px] text-[18px] leading-[24px] tracking-[-0.190px] text-[#222]">Введите здесь текст для поиска</span>
      </div>
      <Svg w={22} h={21} className="ml-[19px]">
        <path d="M1 0v4h12V0M1 21v-4h12v4M1 6.500h12v8H1zM18.500 0v4M18.500 11v10" stroke="#111" strokeWidth="1.500" />
        <rect x="17" y="6" width="3.500" height="3.500" fill="#111" />
      </Svg>
      <TaskButton icon={ExplorerIcon} className="ml-[28px] w-[51px]" />
      <TaskButton icon={ChromeIcon} className="ml-[11px] w-[51px]" />
      <TaskButton icon={WordIcon} className="ml-[11px] w-[51px]" />
      <TaskButton icon={<NextionLogo />} active className="ml-[6px] w-[61px]" />
      <div className="ml-auto flex h-full items-center">
        <Svg w={16} h={10}><path d="M1 9l7-7 7 7" stroke="#111" strokeWidth="1.500" /></Svg>
        <Svg w={21} h={18} className="ml-[12px]">
          <path d="M5 14c-5 0-5-6-1-7 1-6 10-6 12 0 3 0 4 3 3 5" stroke="#111" strokeWidth="1.500" fill="#fff" />
          <circle cx="13" cy="12" r="5.500" fill="#fff" />
          <path d="M9 11c1-3 6-3 8-1M17 13c-1 3-6 3-8 1M17 7v3h-3M9 17v-3h3" stroke="#1577d0" strokeWidth="1.500" />
        </Svg>
        <Svg w={21} h={16} className="ml-[8px]">
          <rect x="3.700" y="3.700" width="15" height="10.600" stroke="#000" strokeWidth="1.200" />
          <rect x="5.500" y="5.500" width="11.500" height="7" fill="#000" />
          <path d="M20 7v4" stroke="#000" strokeWidth="1.500" />
          <path d="M0 0h7v8H0z" fill="#d6d6d6" />
          <path d="M1.500 1v2M5 1v2M.8 3.500h5v2.500h-5zM3.300 6v4" stroke="#000" strokeWidth="1.300" />
        </Svg>
        <Svg w={18} h={18} className="ml-[12px]">
          <path d="M1 16A15 15 0 0 1 16 2M5 16.500A11 11 0 0 1 16 6M8.500 16.500A8 8 0 0 1 16 10" stroke="#333" strokeWidth="1.400" />
          <circle cx="14.500" cy="15.500" r="1.800" fill="#111" />
        </Svg>
        <Svg w={21} h={18} className="ml-[9px]">
          <path d="M1 6h3l5-4v14l-5-4H1z" stroke="#111" strokeWidth="1.400" />
          <path d="M12 6c1.500 2 1.500 4 0 6M14.500 4c3 3 3 7 0 10" stroke="#111" strokeWidth="1.300" />
          <path d="M17 1.500c4 4 4 11 0 15" stroke="#999" strokeWidth="1.300" />
        </Svg>
        <span className="ml-[13px] w-[27px] text-[15px] tracking-[-0.600px]">РУС</span>
        <div className="ml-[16px] flex w-[72px] flex-col items-center text-[14.500px] leading-[23px] tracking-[-0.550px]">
          <span>14:55</span>
          <span>10.08.2020</span>
        </div>
        <Svg w={21} h={20} className="ml-[22px]">
          <path d="M0 0h20v15H8l-4 4v-4H0z" fill="#000" />
          <path d="M3 4.500h14M3 8h14M3 11.500h8" stroke="#d6d6d6" strokeWidth="1.400" />
          <path d="M16 10c1 4-1 6-5 6 2 4 8 3 8-2 0-2-1-4-3-4z" fill="#000" stroke="#d6d6d6" strokeWidth="1.300" />
        </Svg>
        <div className="ml-[24px] h-full w-[6px] border-l border-[#b3b3b3]" />
      </div>
    </div>
  );
}

/* ---------- page ---------- */

const status = [
  ['Encoding:iso-8859-5', 'w-[142px] tracking-[-0.050px]'], ['|', 'w-[6px]'], ['Model:NX4024T032_011', 'w-[177px] tracking-[0.250px]'],
  ['inch:3.2(240X400)', 'w-[130px]'], ['Flash:4M', 'w-[65px]'], ['RAM:3584B', 'w-[85px]'],
  ['Frequency:48M', 'w-[103px] tracking-[-0.350px]'], ['|', 'w-[15px]'], ['Coordinate', 'w-[80px] tracking-[0.250px]'], ['X:45', 'w-[38px]'], ['Y:73', 'w-[40px]'],
];

export default function App() {
  return (
    <div className="flex h-[1080px] w-[1920px] flex-col overflow-hidden bg-[#bfdbff] font-['Liberation_Sans',Arial,sans-serif] text-[15px]">
      {/* Title bar */}
      <div className="flex h-[28px] shrink-0 items-center border-b border-t border-b-[#aed0fa] border-t-[#b5c3d6] bg-gradient-to-b from-[#cbddf4] to-[#e3eefc]">
        <div className="mb-[6px]"><NextionLogo w={20} h={20} /></div>
        <span className="mb-[3px] whitespace-nowrap pl-[5px] font-['Open_Sans',sans-serif] text-[14.500px] tracking-[-0.140px] text-[#4678bd]">
          Nextion Editor(C:\Users\Admin\OneDrive\Рабочий стол\Онлайн-курс\Лекции\Неделя 11\Картинки\proj1.HMI)
        </span>
        <Svg w={104} h={16} className="mb-[6px] ml-auto mr-[16px]">
          <path d="M0 11h10" stroke="#66707f" strokeWidth="2.500" />
          <path d="M45.500 5.500h7v8h-7zM48 5V3h7v8h-2" stroke="#66707f" strokeWidth="1.500" />
          <path d="M92 2l9 10M101 2l-9 10" stroke="#7b8594" strokeWidth="2.200" />
        </Svg>
      </div>

      {/* Menu */}
      <div className="flex h-[37px] shrink-0 items-center pl-[10px] pt-[5px] text-[#2a4f96]">
        <span className="w-[40px]">File</span>
        <span className="w-[52px] tracking-[0.400px]">Tools</span>
        <span className="w-[63px] tracking-[0.100px]">Setting</span>
        <span className="w-[46px]">Help</span>
        <span className="tracking-[0.300px]">About</span>
        <span className="ml-auto">Style</span>
        <span className="mb-[7px] ml-[2px] mr-[8px]"><Tri dir="down" w={8} h={5} color="#000" /></span>
      </div>

      {/* Toolbars */}
      <div className="flex h-[37px] shrink-0 pl-[2px]">
        <Strip className="w-[482px]">
          <Tool icon={OpenIcon} label="Open" className="ml-[6px] w-[78px]" />
          <Tool icon={NewIcon} label="New" className="w-[65px]" />
          <Tool icon={SaveIcon} label="Save" className="w-[71px]" gap="pl-[2px]" />
          <Tool icon={CompileIcon} label="Compile" className="w-[94px]" gap="pl-[3px] tracking-[0.100px]" />
          <Tool icon={DebugIcon} label="Debug" className="w-[86px]" gap="pl-[3px]" />
          <Tool icon={UploadIcon} label="Upload" gap="pl-[5px]" />
        </Strip>
        <Strip className="ml-[5px] w-[384px]">
          <Tool icon={CopyIcon} label="Copy" className="ml-[7px] w-[72px]" gap="pl-[2px]" />
          <Tool icon={CutIcon} label="Cut" className="w-[60px]" gap="pl-[3px]" />
          <Tool icon={PasteIcon} label="Paste" className="w-[75px]" gap="pl-[3px]" />
          <div className="w-[16px]"><Tri dir="down" w={7} h={4} color="#000" /></div>
          <Tool icon={<LockBase />} label="Lock" className="w-[69px]" gap="pl-[3px]" />
          <Tool icon={<LockBase open />} label="Unlock" gap="pl-[3px]" />
        </Strip>
        <Strip className="ml-[5px] w-[271px]">
          <Tool icon={DeleteIcon} label="Delete" className="ml-[8px] w-[80px]" gap="pl-[2px]" />
          <Tool icon={UndoIcon} label="Undo(0)" className="w-[92px]" gap="pl-[5px]" />
          <Tool icon={RedoIcon} label="Redo(0)" gap="pl-[5px]" />
        </Strip>
        <Strip className="ml-[4px] w-[333px]">
          <Tool icon={GearIcon} label="Device ID" className="ml-[6px] w-[104px] whitespace-nowrap" gap="pl-[3px] tracking-[0.400px]" />
          <span className="w-[45px] pt-[5px] leading-[20px] tracking-[0.200px] text-black">100%</span>
          <Zoomer />
        </Strip>
      </div>
      <div className="mt-[2px] flex h-[36px] shrink-0 pl-[2px]">
        <Strip className="w-[533px]">
          <div className="flex gap-[9.100px] pl-[5px]">
            {alignIcons.map((ic, i) => <Svg key={i} w={26} h={24}>{ic}</Svg>)}
          </div>
        </Strip>
        <Strip className="ml-[5px] w-[117px]">
          <Svg w={26} h={24} className="ml-[7px]">
            <text x="7" y="17" fontSize="21" fontWeight="700" textLength="12" lengthAdjust="spacingAndGlyphs" fill="#333" fontFamily="Liberation Sans">C</text>
            <path d="M7 21.500h13" stroke="#333" strokeWidth="2.200" />
          </Svg>
          <div className="flex gap-[11px] pl-[8px]">
            <CommentIcon color="#cccfd4" lines="#d6d9dc" />
            <CommentIcon color="#cccfd4" lines="#d6d9dc" cross="#b4b7bb" />
          </div>
        </Strip>
      </div>

      {/* Workspace */}
      <div className="flex h-[869px] shrink-0">
        <div className="flex w-[271px] shrink-0 flex-col pl-px">
          <PanelHeader title="Toolbox" />
          <div className="-ml-px"><Toolbox /></div>
          <PanelHeader title="Fonts" active className="mt-[7px]" />
          <div className="-ml-px"><FontsPanel /></div>
          <div className="mt-[5px] flex h-[26px] shrink-0 gap-[3px] border-t border-[#93b4de] bg-[#cfe2fc] pl-[6px] text-[#3a62a8]">
            {bottomTabs.map(([t, w]) => (
              <div key={t} className={`flex h-[25px] justify-center rounded-b-[3px] border border-t-0 border-[#9bb4d6] pt-[3px] leading-[20px] ${w} ${t === 'Fonts' ? 'bg-white' : 'bg-gradient-to-b from-[#cfe0f7] to-[#dceafc]'}`}>{t}</div>
            ))}
          </div>
        </div>
        <Center />
        <RightColumn />
      </div>

      {/* Status bar */}
      <div className="flex h-[21px] shrink-0 whitespace-nowrap border-b border-[#6f9fdc] bg-gradient-to-b from-[#e0ecff] to-[#b9d5fe] pl-[2px] pt-[2px] leading-[20px] text-[#2a4f96]">
        {status.map(([t, w], i) => <span key={i} className={`shrink-0 ${w}`}>{t}</span>)}
      </div>

      <Taskbar />
    </div>
  );
}
